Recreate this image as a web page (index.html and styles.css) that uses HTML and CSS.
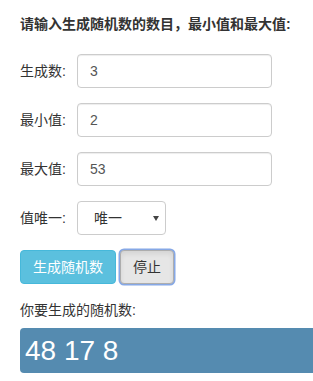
FILE: index.html
```html
<!DOCTYPE html>
<html lang="zh">
<head>
<meta charset="utf-8">
<link rel="stylesheet" href="styles.css">
</head>
<body>
<div class="page">
  <h4 class="title">请输入生成随机数的数目，最小值和最大值:</h4>
  <div class="row">
    <label class="label">生成数:</label>
    <input class="field" type="text" value="3">
  </div>
  <div class="row">
    <label class="label">最小值:</label>
    <input class="field" type="text" value="2">
  </div>
  <div class="row">
    <label class="label">最大值:</label>
    <input class="field" type="text" value="53">
  </div>
  <div class="row">
    <label class="label">值唯一:</label>
    <div class="select-wrap">
      <select class="select">
        <option>唯一</option>
        <option>不唯一</option>
      </select>
      <span class="caret"></span>
    </div>
  </div>
  <div class="buttons">
    <button class="btn btn-info" type="button">生成随机数</button>
    <button class="btn btn-default active" type="button">停止</button>
  </div>
  <p class="result-label">你要生成的随机数:</p>
  <div class="result">48 17 8</div>
</div>
</body>
</html>
```
FILE: styles.css
```css
html, body {
  margin: 0;
  padding: 0;
  overflow: hidden;
  background: #fff;
}
body {
  font-family: "Liberation Sans", "Noto Sans CJK SC", sans-serif;
  font-size: 14px;
  line-height: 20px;
  color: #333;
}
.page {
  padding: 14px 20px 0 20px;
}
.title {
  margin: 0 0 20px 0;
  font-size: 14px;
  font-weight: bold;
  line-height: 20px;
}
.row {
  display: flex;
  align-items: center;
  margin-bottom: 15px;
}
.label {
  width: 57px;
  flex: none;
}
.field {
  box-sizing: border-box;
  width: 195px;
  height: 34px;
  padding: 6px 12px;
  border: 1px solid #ccc;
  border-radius: 4px;
  font-family: "Liberation Sans", "Noto Sans CJK SC", sans-serif;
  font-size: 14px;
  color: #555;
  box-shadow: inset 0 1px 1px rgba(0,0,0,.075);
  outline: none;
}
.select-wrap {
  position: relative;
  width: 89px;
  height: 34px;
}
.select {
  -webkit-appearance: none;
  appearance: none;
  box-sizing: border-box;
  width: 89px;
  height: 34px;
  padding: 6px 12px 6px 16px;
  border: 1px solid #ccc;
  border-radius: 4px;
  background: #fff;
  font-family: "Liberation Sans", "Noto Sans CJK SC", sans-serif;
  font-size: 14px;
  color: #333;
  outline: none;
}
.caret {
  position: absolute;
  right: 7px;
  top: 15px;
  width: 0;
  height: 0;
  border-left: 3px solid transparent;
  border-right: 3px solid transparent;
  border-top: 5px solid #444;
  pointer-events: none;
}
.buttons {
  display: flex;
  gap: 4px;
  margin-bottom: 16px;
}
.btn {
  box-sizing: border-box;
  height: 34px;
  padding: 6px 12px;
  border: 1px solid transparent;
  border-radius: 4px;
  font-family: "Liberation Sans", "Noto Sans CJK SC", sans-serif;
  font-size: 14px;
  line-height: 20px;
}
.btn-info {
  background: #5bc0de;
  border-color: #46b8da;
  color: #fff;
}
.btn-default {
  background: #e6e6e6;
  border-color: #adadad;
  color: #333;
}
.btn-default.active {
  box-shadow: 0 0 0 1.5px #86a8e6, inset 0 3px 5px rgba(0,0,0,.08);
}
.result-label {
  margin: 0 0 8px 0;
}
.result {
  margin-right: -20px;
  height: 45px;
  padding-left: 5px;
  background: #558bb0;
  border-radius: 4px 0 0 4px;
  color: #fff;
  font-size: 28px;
  line-height: 45px;
}
```
